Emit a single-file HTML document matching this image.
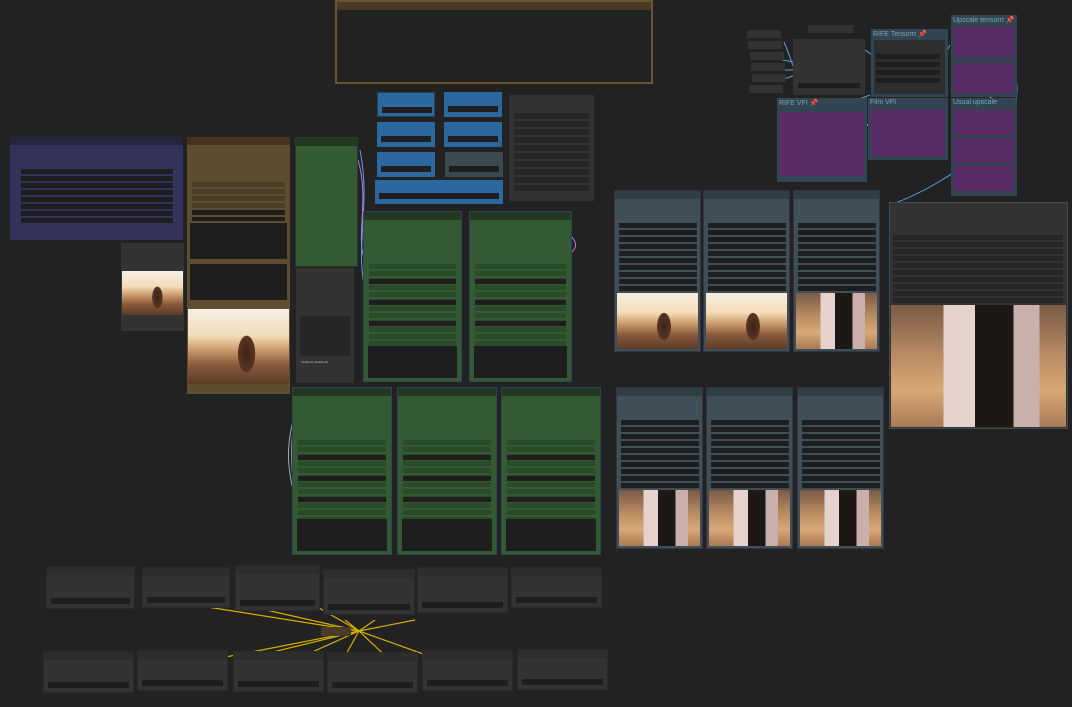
<!DOCTYPE html>
<html><head><meta charset="utf-8">
<style>
body{margin:0;width:1072px;height:707px;background:#222;overflow:hidden;position:relative;font-family:"Liberation Sans",sans-serif}
.n{position:absolute;box-sizing:border-box}
.h{position:absolute;left:0;right:0;top:0}
.r{position:absolute;background:#1e1e1e}
.img{position:absolute;background:
radial-gradient(ellipse 14% 40% at 58% 60%,#3a2418 0,#5a3522 60%,transparent 62%),
linear-gradient(180deg,#f6efe2 0%,#f3dcb8 35%,#c99a6a 55%,#8a5a3c 75%,#5b3a28 100%)}
.img2{position:absolute;background:
linear-gradient(90deg,transparent 0 30%,#e6d2cc 30% 48%,#1d1715 48% 70%,#c9b0aa 70% 85%,transparent 85%),
linear-gradient(180deg,#7a5a45 0%,#b78a62 40%,#d9a877 70%,#a87a55 100%)}
.lbl{position:absolute;font-size:7px;color:#7ab;white-space:nowrap}
.d{position:absolute;width:3px;height:3px}
</style></head><body>
<svg style="position:absolute;left:0;top:0" width="1072" height="707">
<g stroke="#d4b000" stroke-width="1.2" fill="none">
<path d="M359 631 L195 605"/><path d="M359 631 L235 603"/><path d="M359 631 L300 597"/><path d="M359 631 L345 620"/>
<path d="M359 631 L375 620"/><path d="M359 631 L415 620"/><path d="M359 631 L200 662"/><path d="M359 631 L240 660"/>
<path d="M359 631 L290 662"/><path d="M359 631 L340 665"/><path d="M359 631 L395 665"/><path d="M359 631 L440 660"/>
</g>
<g fill="none" stroke-width="1">
<path d="M358 160 C370 200,355 240,365 260" stroke="#c07adf"/>
<path d="M360 150 C372 210,352 250,368 300" stroke="#5aa0e0"/>
<path d="M570 235 C580 245,575 250,568 255" stroke="#c07adf"/>
<path d="M300 400 C280 450,290 480,300 515" stroke="#9ab"/>
<path d="M300 395 C285 440,295 490,295 520" stroke="#aab"/>
<path d="M784 120 C770 140,800 130,830 110 L870 95" stroke="#5aa0e0"/>
<path d="M795 125 L868 125" stroke="#c07adf" stroke-width="2"/>
<path d="M1015 77 C1030 120,960 180,890 205" stroke="#5aa0e0"/>
<path d="M1015 80 C990 100,970 110,958 115" stroke="#a090c0"/>
<path d="M1012 125 C1000 150,970 170,955 185" stroke="#a090c0"/>
<path d="M1012 152 C990 170,970 180,955 190" stroke="#6070e0"/>
<path d="M784 42 C790 55,790 60,795 70" stroke="#5aa0e0"/>
<path d="M782 60 L795 62 M782 70 L795 70 M782 80 L795 75" stroke="#5aa0e0"/>
<path d="M865 50 L872 55" stroke="#5aa0e0"/>
<path d="M945 55 L950 45" stroke="#5aa0e0"/>
</g>
</svg>

<!-- top brown group -->
<div class="n" style="left:335px;top:0;width:318px;height:84px;border:2px solid #6b5430"><div class="h" style="height:8px;background:#4a3a24"></div></div>

<!-- blue nodes -->
<div class="n" style="left:377px;top:92px;width:58px;height:25px;background:#2c68a0;border:1px solid #245"><div class="r" style="left:4px;top:14px;width:50px;height:6px"></div></div>
<div class="n" style="left:444px;top:92px;width:58px;height:25px;background:#2c68a0"><div class="r" style="left:4px;top:14px;width:50px;height:6px"></div></div>
<div class="n" style="left:377px;top:122px;width:58px;height:25px;background:#2c68a0"><div class="r" style="left:4px;top:14px;width:50px;height:6px"></div></div>
<div class="n" style="left:444px;top:122px;width:58px;height:25px;background:#2c68a0"><div class="r" style="left:4px;top:14px;width:50px;height:6px"></div></div>
<div class="n" style="left:377px;top:152px;width:58px;height:25px;background:#2c68a0"><div class="r" style="left:4px;top:14px;width:50px;height:6px"></div></div>
<div class="n" style="left:445px;top:152px;width:58px;height:25px;background:#3a4a50"><div class="r" style="left:4px;top:14px;width:50px;height:6px"></div></div>
<div class="n" style="left:375px;top:180px;width:128px;height:24px;background:#2c68a0"><div class="r" style="left:4px;top:13px;width:120px;height:6px"></div></div>

<!-- grey node -->
<div class="n" style="left:509px;top:95px;width:85px;height:106px;background:#333" id="g1"></div>

<!-- purple-blue node -->
<div class="n" style="left:10px;top:137px;width:173px;height:103px;background:#32325a"><div class="h" style="height:8px;background:#25253f"></div><div id="pb"></div></div>

<!-- small image node -->
<div class="n" style="left:121px;top:243px;width:63px;height:88px;background:#333"><div class="img" style="left:1px;top:28px;width:61px;height:44px"></div></div>

<!-- brown node -->
<div class="n" style="left:187px;top:137px;width:103px;height:257px;background:#5f4d30"><div class="h" style="height:8px;background:#45331e"></div>
<div class="r" style="left:3px;top:86px;width:97px;height:36px"></div>
<div class="r" style="left:3px;top:127px;width:97px;height:36px"></div>
<div class="r" style="left:5px;top:45px;width:93px;height:5px;background:#4a3d28"></div>
<div class="r" style="left:5px;top:52px;width:93px;height:5px;background:#4a3d28"></div>
<div class="r" style="left:5px;top:59px;width:93px;height:5px;background:#4a3d28"></div>
<div class="r" style="left:5px;top:66px;width:93px;height:5px;background:#4a3d28"></div>
<div class="r" style="left:5px;top:73px;width:93px;height:5px"></div>
<div class="r" style="left:5px;top:80px;width:93px;height:4px"></div>
<div class="img" style="left:1px;top:172px;width:101px;height:75px"></div></div>

<!-- green nodes -->
<div class="n" style="left:295px;top:137px;width:63px;height:130px;background:#345a34;border:1px solid #2a3a2a"><div class="h" style="height:8px;background:#22381f"></div></div>
<div class="n" style="left:296px;top:268px;width:58px;height:115px;background:#333"><div class="r" style="left:4px;top:48px;width:50px;height:40px;background:#262626"></div><div style="position:absolute;left:5px;top:92px;font-size:3px;color:#ccc">Output to models dir</div></div>
<div class="n gr" style="left:363px;top:211px;width:99px;height:171px"></div>
<div class="n gr" style="left:469px;top:211px;width:103px;height:171px"></div>
<div class="n gr" style="left:292px;top:387px;width:100px;height:168px"></div>
<div class="n gr" style="left:397px;top:387px;width:100px;height:168px"></div>
<div class="n gr" style="left:501px;top:387px;width:100px;height:168px"></div>

<!-- teal nodes -->
<div class="n tl" data-i="1" style="left:614px;top:190px;width:87px;height:162px"></div>
<div class="n tl" data-i="1" style="left:703px;top:190px;width:87px;height:162px"></div>
<div class="n tl" data-i="2" style="left:793px;top:190px;width:87px;height:162px"></div>
<div class="n tl" data-i="2" style="left:616px;top:387px;width:87px;height:162px"></div>
<div class="n tl" data-i="2" style="left:706px;top:387px;width:87px;height:162px"></div>
<div class="n tl" data-i="2" style="left:797px;top:387px;width:87px;height:162px"></div>
<div class="n" style="left:889px;top:202px;width:179px;height:227px;background:#333;border:1px solid #3d4d57" id="big"></div>

<!-- purple nodes -->
<div class="n" style="left:777px;top:98px;width:90px;height:84px;background:#334452"><span class="lbl" style="left:2px;top:1px">RIFE VFI 📌</span><div class="r" style="left:3px;top:14px;width:84px;height:64px;background:#5a2c68"></div></div>
<div class="n" style="left:868px;top:98px;width:80px;height:62px;background:#334452"><span class="lbl" style="left:2px;top:1px">Film VFI</span><div class="r" style="left:3px;top:12px;width:74px;height:46px;background:#5a2c68"></div></div>
<div class="n" style="left:951px;top:15px;width:66px;height:82px;background:#334452"><span class="lbl" style="left:2px;top:1px">Upscale tensorrt 📌</span><div class="r" style="left:3px;top:12px;width:60px;height:30px;background:#5a2c68"></div><div class="r" style="left:3px;top:48px;width:60px;height:30px;background:#5a2c68"></div></div>
<div class="n" style="left:951px;top:98px;width:66px;height:98px;background:#334452"><span class="lbl" style="left:2px;top:1px">Usual upscale</span><div class="r" style="left:3px;top:12px;width:60px;height:25px;background:#5a2c68"></div><div class="r" style="left:3px;top:40px;width:60px;height:25px;background:#5a2c68"></div><div class="r" style="left:3px;top:68px;width:60px;height:25px;background:#5a2c68"></div></div>
<div class="n" style="left:871px;top:29px;width:77px;height:68px;background:#334452"><span class="lbl" style="left:2px;top:1px">RIFE Tensorrt 📌</span><div class="r" style="left:3px;top:11px;width:71px;height:54px;background:#2e2e2e"></div><div class="r" style="left:5px;top:25px;width:64px;height:5px"></div><div class="r" style="left:5px;top:33px;width:64px;height:5px"></div><div class="r" style="left:5px;top:41px;width:64px;height:5px"></div><div class="r" style="left:5px;top:49px;width:64px;height:5px"></div></div>
<div class="n" style="left:793px;top:39px;width:72px;height:56px;background:#333"><div class="r" style="left:5px;top:44px;width:62px;height:5px"></div></div>
<div class="n" style="left:808px;top:25px;width:45px;height:8px;background:#333"></div>
<div id="sm"></div>
<div id="bot"></div>

<script>
function rows(el,x,y,w,n,step,h,c){for(let i=0;i<n;i++){let d=document.createElement('div');d.className='r';d.style.cssText=`left:${x}px;top:${y+i*step}px;width:${w}px;height:${h}px;background:${c||'#1e1e1e'}`;el.appendChild(d);}}
rows(document.getElementById('g1'),5,18,75,10,8,6,'#262626');
rows(document.querySelector('#pb').parentNode,11,32,152,8,7,5,'#1e1e1e');
document.querySelectorAll('.gr').forEach(e=>{e.style.background='#345a34';e.style.border='1px solid #2c4658';
let h=document.createElement('div');h.className='h';h.style.cssText='height:8px;background:#22381f';e.appendChild(h);
let w=e.offsetWidth;rows(e,5,52,w-12,12,7,5,'#2a4a2a');rows(e,5,67,w-12,3,21,5,'#1e1e1e');
let b=document.createElement('div');b.className='r';b.style.cssText=`left:4px;top:${e.offsetHeight-37}px;width:${w-10}px;height:32px`;e.appendChild(b);});
document.querySelectorAll('.tl').forEach(e=>{e.style.background='#3e4f58';e.style.border='1px solid #334';
let h=document.createElement('div');h.className='h';h.style.cssText='height:8px;background:#2f3d45';e.appendChild(h);
rows(e,4,32,78,10,7,5,'#1e1e1e');let im=document.createElement('div');im.className=e.dataset.i=='1'?'img':'img2';im.style.cssText='left:2px;top:102px;width:81px;height:56px';e.appendChild(im);});
let big=document.getElementById('big');rows(big,3,32,170,10,7,5,'#262626');let bi=document.createElement('div');bi.className='img2';bi.style.cssText='left:1px;top:102px;width:175px;height:122px';big.appendChild(bi);
let sm=document.getElementById('sm');[[747,30],[748,41],[750,52],[751,63],[752,74],[749,85]].forEach(p=>{let d=document.createElement('div');d.className='n';d.style.cssText=`left:${p[0]}px;top:${p[1]}px;width:34px;height:8px;background:#333`;sm.appendChild(d);});
let bot=document.getElementById('bot');
[[46,566,89,43],[142,567,88,41],[235,565,85,46],[323,569,92,46],[417,567,91,46],[511,567,91,41],[43,651,91,42],[137,650,91,41],[233,651,91,41],[327,652,91,41],[422,650,91,41],[517,649,91,41]].forEach(p=>{let d=document.createElement('div');d.className='n';d.style.cssText=`left:${p[0]}px;top:${p[1]}px;width:${p[2]}px;height:${p[3]}px;background:#333;border:1px solid #2a2a2a`;
let h=document.createElement('div');h.className='h';h.style.cssText='height:8px;background:#2d2d2d';d.appendChild(h);
let r=document.createElement('div');r.className='r';r.style.cssText=`left:4px;top:${p[3]-12}px;width:${p[2]-10}px;height:6px`;d.appendChild(r);bot.appendChild(d);});
let br=document.createElement('div');br.className='n';br.style.cssText='left:321px;top:627px;width:30px;height:9px;background:#4a3a28';bot.appendChild(br);
</script>
</body></html>
